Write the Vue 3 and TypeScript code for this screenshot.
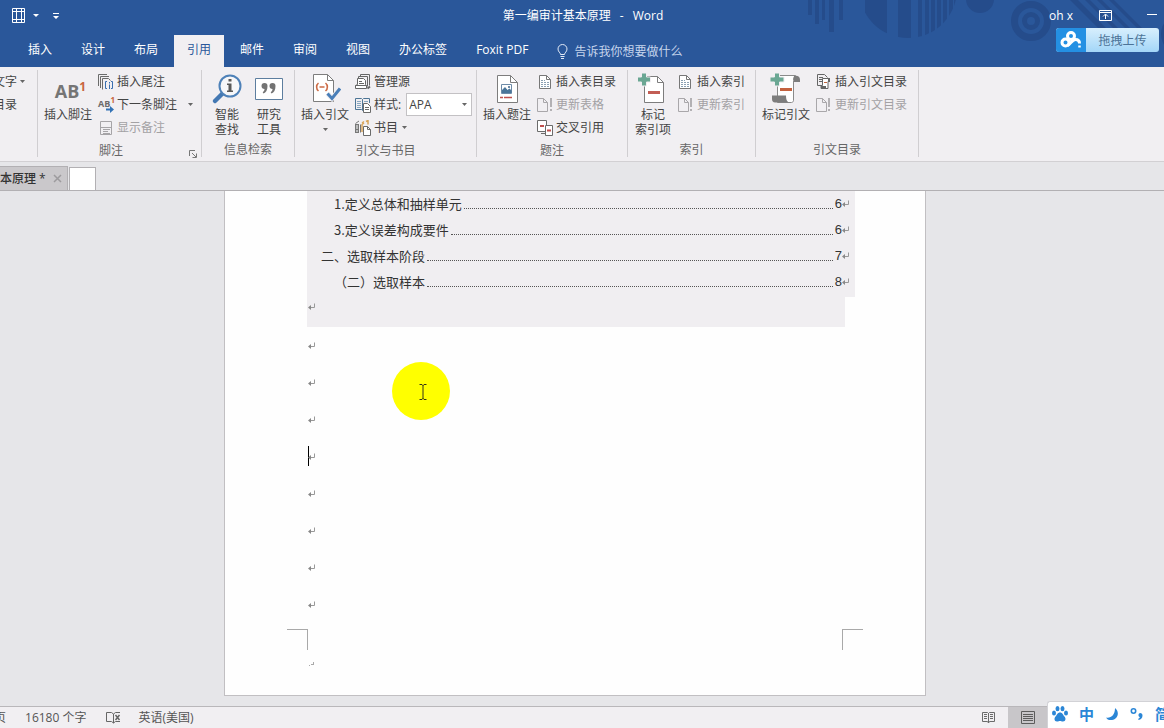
<script setup lang="ts">
import { ref } from 'vue'

interface TocEntry {
  text: string
  page: number
  level: number
}

const activeTab = ref('引用')
const tabs: string[] = ['插入', '设计', '布局', '引用', '邮件', '审阅', '视图', '办公标签', 'Foxit PDF']
const citationStyle = ref('APA')

const toc: TocEntry[] = [
  { text: '1.定义总体和抽样单元', page: 6, level: 2 },
  { text: '3.定义误差构成要件', page: 6, level: 2 },
  { text: '二、选取样本阶段', page: 7, level: 1 },
  { text: '（二）选取样本', page: 8, level: 2 },
]
const emptyParagraphs = 8
const caretParagraph = 4
const thinStripes: number[] = [918, 925, 931, 937, 943, 949, 954]
</script>

<template>
  <div class="app">
    <header class="header">
      <svg class="pattern" width="364" height="67" viewBox="800 0 364 67" aria-hidden="true">
        <defs>
          <clipPath id="disc"><circle cx="908" cy="-11" r="49" /></clipPath>
        </defs>
        <g fill="#254c8b">
          <path d="M808 0h4v15h-4zM815 0h4v24h-4zM822 0h3v20h-3zM829 0h5v32h-5zM839 0h4v20h-4z" />
          <g clip-path="url(#disc)">
            <path d="M865 0h22v40h-22zM898 0h13v40h-13z" />
            <rect v-for="x in thinStripes" :key="x" :x="x" y="0" width="4" height="40" />
          </g>
          <circle cx="980" cy="-1" r="14" />
          <path d="M1070 0h8l42 42h-8zM1085 0h5l42 42h-5zM1097 0h5l42 42h-5zM1109 0h5l42 42h-5z" />
          <circle cx="1181" cy="34" r="20" />
        </g>
        <circle cx="1031" cy="21" r="16.500" fill="none" stroke="#254c8b" stroke-width="7" />
        <circle cx="1031" cy="21" r="6.500" fill="none" stroke="#254c8b" stroke-width="5" />
      </svg>

      <div class="titlebar">
        <div class="quick">
          <button class="plain" aria-label="表格">
            <svg width="14" height="16" viewBox="0 0 14 16" fill="none" stroke="#fff"><path d="M.5.500h12v14H.500zM4.500 0v15M9.500 0v15M0 3.500h13M0 11.500h13" /></svg>
          </button>
          <button class="plain quick-arrow" aria-label="更多表格选项">
            <svg width="6" height="4" viewBox="0 0 6 4"><path d="M0 0h6L3 3z" fill="#fff" /></svg>
          </button>
          <button class="plain quick-custom" aria-label="自定义快速访问工具栏">
            <svg width="6" height="7" viewBox="0 0 6 7"><path d="M0 0h6v1H0zM0 3h6L3 6z" fill="#fff" /></svg>
          </button>
        </div>
        <h1 class="title"><span>第一编审计基本原理</span><span>-</span><span>Word</span></h1>
        <div class="account">
          <span class="user">oh x</span>
          <button class="plain" aria-label="功能区显示选项">
            <svg width="13" height="11" viewBox="0 0 13 11" fill="none" stroke="#fff"><path d="M.5.500h12v10H.500zM0 2.500h13M6.500 9V4.500M4 6.500l2.500-2.500L9 6.500" /></svg>
          </button>
          <button class="plain minimize" aria-label="最小化">
            <svg width="10" height="2" viewBox="0 0 10 2"><path d="M0 0h10v1H0z" fill="#fff" /></svg>
          </button>
        </div>
      </div>

      <nav class="tabs">
        <button v-for="t in tabs" :key="t" class="tab" :class="{ active: t === activeTab }" @click="activeTab = t">{{ t }}</button>
        <button class="tell">
          <svg width="11" height="15" viewBox="0 0 11 15" fill="none" stroke="#e3ebf7"><path d="M3.500 10.500c0-2-2.500-2.500-2.500-5.500a4.500 4.500 0 0 1 9 0c0 3-2.500 3.500-2.500 5.500zM3.500 12.500h4M4 14.500h3" /></svg>
          告诉我你想要做什么
        </button>
      </nav>

      <button class="upload">
        <span class="upload-logo">
          <svg width="22" height="18" viewBox="0 0 22 18" fill="none" stroke="#fff" stroke-width="3"><circle cx="5.500" cy="11.500" r="3.500" /><circle cx="11" cy="5" r="3.500" /><path d="M7.500 14.500c3-1 4.500-6 8-6 2.500 0 4 1.500 4 4" /><path d="M19.500 14.500v2" stroke-width="2.500" /></svg>
        </span>
        <span class="upload-text">拖拽上传</span>
      </button>
    </header>

    <section class="ribbon">
      <div class="group g-text">
        <div class="list cut">
          <button class="cmd">文字 <svg class="caret" width="5" height="3" viewBox="0 0 5 3"><path d="M0 0h5L2.500 3z" /></svg></button>
          <button class="cmd">目录</button>
        </div>
      </div>

      <div class="group g-foot">
        <div class="body">
          <button class="big">
            <span class="ab-icon">AB<sup>1</sup></span>
            <span>插入脚注</span>
          </button>
          <div class="list">
            <button class="cmd">
              <svg width="16" height="16" viewBox="0 0 16 16" fill="none" stroke="#6b6b6b"><path d="M.5 12V.500H9M2.500 14V2.500H11M4.500 15.500v-11h6l2 2" /><path d="M9 7.500H7.500v7H9M13 7.500h1.500v7H13" stroke="#3a6fb0" /><path d="M11 8h1v1.500h-1zM11 10.500h1V15h-1z" fill="#3a6fb0" stroke="none" /></svg>
              插入尾注
            </button>
            <button class="cmd">
              <span class="ab-small">AB<sup>1</sup><svg width="8" height="7" viewBox="0 0 8 7"><path d="M0 2.500h4V0l4 3.500L4 7V4.500H0z" fill="#3272b5" /></svg></span>
              下一条脚注
              <svg class="caret far" width="5" height="3" viewBox="0 0 5 3"><path d="M0 0h5L2.500 3z" /></svg>
            </button>
            <button class="cmd off" disabled>
              <svg width="16" height="16" viewBox="0 0 16 16" fill="none" stroke="#a6a4a7"><path d="M2.500 1.500h11v13h-11zM2 7.500h12M5 9.500h7M5 11.500h5M5 13.500h7" /></svg>
              显示备注
            </button>
          </div>
        </div>
        <div class="caption with-launcher">脚注
          <button class="plain launcher" aria-label="脚注和尾注设置">
            <svg width="8" height="8" viewBox="0 0 8 8" fill="none" stroke="#777"><path d="M.5 6V.500H6M3 3l4 4M7.500 3.500v4h-4" /></svg>
          </button>
        </div>
      </div>

      <div class="group g-info">
        <div class="body center">
          <button class="big mid">
            <svg width="32" height="32" viewBox="0 0 32 32"><path d="M4 28l8-8" stroke="#4478b3" stroke-width="4.500" stroke-linecap="round" /><circle cx="19" cy="13" r="10.500" fill="#f7f7f9" stroke="#4e81b8" stroke-width="2" /><path d="M17.500 6h3v2.500h-3zM16 10.500h4.500v7H22V19h-6v-1.500h1.500V12H16z" fill="#595959" /></svg>
            <span>智能<br />查找</span>
          </button>
          <button class="big mid">
            <svg width="32" height="32" viewBox="0 0 32 32"><path d="M2.500 5.500h27v21h-27z" fill="#fff" stroke="#5d7e9f" /><path d="M8.500 13a3 3 0 1 1 6 0c0 4-1.500 6.500-4 7.500l-.8-1.300c1.300-.8 1.800-1.800 1.800-3.200-1.800 0-3-1.200-3-3zM16.500 13a3 3 0 1 1 6 0c0 4-1.500 6.500-4 7.500l-.8-1.300c1.300-.8 1.800-1.800 1.800-3.200-1.800 0-3-1.200-3-3z" fill="#737373" /></svg>
            <span>研究<br />工具</span>
          </button>
        </div>
        <div class="caption">信息检索</div>
      </div>

      <div class="group g-cite">
        <div class="body">
          <button class="big">
            <svg width="32" height="32" viewBox="0 0 32 32" fill="none"><path d="M4.500 1.500h14l6 6v21h-20z" fill="#fff" stroke="#7d7d7d" /><path d="M18.500 1.500v6h6" stroke="#7d7d7d" /><path d="M9.500 10c-2.500 2-2.500 6 0 8M16.500 10c2.500 2 2.500 6 0 8M10.500 14h5" stroke="#cc6b45" stroke-width="1.600" /><path d="M18.500 20.500l4.500 5L31 15.500" stroke="#f0eef1" stroke-width="5" /><path d="M18.500 20.500l4.500 5L31 15.500" stroke="#4a7fb8" stroke-width="3" /></svg>
            <span>插入引文</span>
            <svg class="caret below" width="5" height="3" viewBox="0 0 5 3"><path d="M0 0h5L2.500 3z" /></svg>
          </button>
          <div class="list">
            <button class="cmd">
              <svg width="16" height="16" viewBox="0 0 16 16" fill="none" stroke="#666"><path d="M5.500 2.500v-2h9v11M3.500 4.500v-2h9v10" /><path d="M.5 14.500v-3l2-1v-6h6l2 2v4l1 1v3zM.5 11.500h11M4 7.500h3M4 9.500h5" fill="#fff" /><path d="M12.500 14.500l2.500-2" stroke-width="2" /></svg>
              管理源
            </button>
            <div class="cmd">
              <svg width="16" height="16" viewBox="0 0 16 16" fill="none"><path d="M.5 1.500h6l1 1 1-1h6V6M.5 1.500v11h6l1 1M7.500 2.500v11" stroke="#4d7595" /><path d="M2 4.500h4M2 6.500h4M2 8.500h4M2 10.500h4M9 4.500h4" stroke="#87a6bf" /><path d="M8.500 6.500h4l3 3v6h-7zM10 10.500h4M10 12.500h4" fill="#fff" stroke="#6b6b6b" /></svg>
              <label for="cite-style">样式:</label>
              <span class="select-wrap">
                <select id="cite-style" v-model="citationStyle">
                  <option>APA</option>
                  <option>MLA</option>
                  <option>Chicago</option>
                </select>
                <svg class="caret" width="5" height="3" viewBox="0 0 5 3"><path d="M0 0h5L2.500 3z" /></svg>
              </span>
            </div>
            <button class="cmd">
              <svg width="16" height="16" viewBox="0 0 16 16" fill="none"><path d="M0 4h4v9H0z" fill="#777" /><path d="M1 6h2M1 8h2M1 11h2" stroke="#fff" /><path d="M.5 3.500L4 1M5.500 4.500v8" stroke="#777" /><path d="M7 12V4.500L9 3M9 1.500L7 3M11 1.500l2-1v4" stroke="#d9a65c" stroke-width="1.500" /><path d="M8.500 6.500h4l3 3v6h-7z" fill="#fff" stroke="#6b6b6b" /><path d="M12.500 6.500v3h3" stroke="#6b6b6b" /></svg>
              书目 <svg class="caret near" width="5" height="3" viewBox="0 0 5 3"><path d="M0 0h5L2.500 3z" /></svg>
            </button>
          </div>
        </div>
        <div class="caption">引文与书目</div>
      </div>

      <div class="group g-caption">
        <div class="body">
          <button class="big">
            <svg width="32" height="32" viewBox="0 0 32 32" fill="none"><path d="M6.500 2.500h13l7 7v20h-20z" fill="#fff" stroke="#7d7d7d" /><path d="M19.500 2.500v7h7" stroke="#7d7d7d" /><path d="M10.500 11.500h10v9h-10z" stroke="#6d8ba8" /><path d="M11 20v-3l3-3 2.500 3 2-1.500 2 2V20z" fill="#4a7599" /><path d="M17 13h2v2h-2z" fill="#6d8ba8" /><path d="M9 24.500h3M13 24.500h8" stroke="#c0504d" stroke-width="1.500" /></svg>
            <span>插入题注</span>
          </button>
          <div class="list">
            <button class="cmd">
              <svg width="16" height="16" viewBox="0 0 16 16" fill="none" stroke="#777"><path d="M2.500 1.500h7l4 4v9h-11z" fill="#fff" /><path d="M9.500 1.500v4h4" /><path d="M4 6.500h4M4 8.500h8M4 10.500h8M4 12.500h8" stroke="#8ba0b3" stroke-dasharray="2 1" /></svg>
              插入表目录
            </button>
            <button class="cmd off" disabled>
              <svg width="16" height="16" viewBox="0 0 16 16" fill="none" stroke="#a9a7aa"><path d="M.5 1.500h6l4 4v9H.500zM6.500 1.500v4h4" /><path d="M13 1h2v9h-2zM13 12h2v2h-2z" fill="#b3b1b4" stroke="none" /></svg>
              更新表格
            </button>
            <button class="cmd">
              <svg width="16" height="16" viewBox="0 0 16 16" fill="none" stroke="#6b6b6b"><path d="M.5.500h9v11h-9z" fill="#fff" /><path d="M8.500 5.500h7v10h-7z" fill="#fff" /><path d="M4 13.500h4" /><path d="M3 6h4M10 10.500h4" stroke="#c0504d" stroke-width="2" /></svg>
              交叉引用
            </button>
          </div>
        </div>
        <div class="caption">题注</div>
      </div>

      <div class="group g-index">
        <div class="body">
          <button class="big narrow">
            <svg width="32" height="32" viewBox="0 0 32 32" fill="none"><path d="M7.500 3.500h13l6 6v20h-19z" fill="#fff" stroke="#7d7d7d" /><path d="M20.500 3.500v6h6" stroke="#7d7d7d" /><path d="M.5 4h4V0h5v4h4v5h-4v4h-5V9h-4z" fill="#6aa793" stroke="#f0eef1" /><path d="M11 18h12v3H11z" fill="#c25d54" /></svg>
            <span>标记<br />索引项</span>
          </button>
          <div class="list">
            <button class="cmd">
              <svg width="16" height="16" viewBox="0 0 16 16" fill="none" stroke="#777"><path d="M1.500 1.500h7l4 4v9h-11z" fill="#fff" /><path d="M8.500 1.500v4h4" /><path d="M3 6.500h4M3 8.500h8M3 10.500h8M3 12.500h8" stroke="#8ba0b3" stroke-dasharray="2 1" /></svg>
              插入索引
            </button>
            <button class="cmd off" disabled>
              <svg width="16" height="16" viewBox="0 0 16 16" fill="none" stroke="#a9a7aa"><path d="M.5 1.500h6l4 4v9H.500zM6.500 1.500v4h4" /><path d="M12 1h2v9h-2zM12 12h2v2h-2z" fill="#b3b1b4" stroke="none" /></svg>
              更新索引
            </button>
          </div>
        </div>
        <div class="caption">索引</div>
      </div>

      <div class="group g-auth">
        <div class="body">
          <button class="big">
            <svg width="32" height="32" viewBox="0 0 32 32" fill="none"><path d="M7.500 2.500h18c-2 1-2 3-2 5v20c0 1-1 2-2 2H7.500z" fill="#fff" stroke="#8a8a8a" /><path d="M24 3c3-1 6 0 6 3.500V9h-6z" fill="#7d7d7d" /><path d="M2 22.500h14c0 4 1 7 4 7H5c-2 0-3-1.500-3-3.500z" fill="#7d7d7d" /><path d="M0 4h4.500V0h5v4H14v5H9.500v4h-5V9H0z" fill="#6aa793" stroke="#f0eef1" /><path d="M10 15h12v3H10z" fill="#c4623f" /></svg>
            <span>标记引文</span>
          </button>
          <div class="list">
            <button class="cmd">
              <svg width="16" height="16" viewBox="0 0 16 16" fill="none" stroke="#666"><path d="M1.500.500h7l3 3M1.500.500v11h4M3 3.500h4M3 5.500h3M3 7.500h3" /><path d="M6.500 4.500h7v3h-1.500v7h-7v-3h1.500z" fill="#fff" /><path d="M5 12h5v3H5zM12 4h2v4h-2z" fill="#666" stroke="none" /><path d="M8 8.500h3" stroke="#c0633f" /></svg>
              插入引文目录
            </button>
            <button class="cmd off" disabled>
              <svg width="16" height="16" viewBox="0 0 16 16" fill="none" stroke="#a9a7aa"><path d="M.5 1.500h6l4 4v9H.500zM6.500 1.500v4h4" /><path d="M12 1h2v9h-2zM12 12h2v2h-2z" fill="#b3b1b4" stroke="none" /></svg>
              更新引文目录
            </button>
          </div>
        </div>
        <div class="caption">引文目录</div>
      </div>
    </section>

    <div class="doc-tabs">
      <div class="doc-tab">
        <span>本原理 *</span>
        <button class="plain" aria-label="关闭">
          <svg width="9" height="9" viewBox="0 0 9 9"><path d="M1 1l7 7M8 1L1 8" stroke="#9d9b9e" stroke-width="1.500" /></svg>
        </button>
      </div>
      <button class="doc-new" aria-label="新建标签"></button>
    </div>

    <main class="workspace">
      <article class="page">
        <div class="toc">
          <a v-for="e in toc" :key="e.text" href="#" class="toc-row" :class="{ sub: e.level === 2 }">
            <span>{{ e.text }}</span>
            <span class="leader"></span>
            <span class="num">{{ e.page }}</span>
            <svg class="mark" width="8" height="8" viewBox="0 0 8 8"><path d="M6.500.500v4H2" /><path class="head" d="M0 4.500L3 2v5z" /></svg>
          </a>
        </div>
        <div class="toc-end">
          <svg class="mark" width="8" height="8" viewBox="0 0 8 8"><path d="M6.500.500v4H2" /><path class="head" d="M0 4.500L3 2v5z" /></svg>
        </div>
        <p v-for="n in emptyParagraphs" :key="n" class="para">
          <span v-if="n === caretParagraph" class="text-caret"></span>
          <svg class="mark" width="8" height="8" viewBox="0 0 8 8"><path d="M6.500.500v4H2" /><path class="head" d="M0 4.500L3 2v5z" /></svg>
        </p>
        <div class="crops">
          <span class="crop left"></span>
          <span class="crop right"></span>
        </div>
        <svg class="foot-mark" width="5" height="4" viewBox="0 0 5 4"><path d="M0 3h1v1H0zM2 2h2V0h1v3H2z" fill="#aaa" /></svg>
        <div class="pointer">
          <svg width="8" height="16" viewBox="0 0 8 16" fill="none" stroke="#33331a"><path d="M.5.500H3l1 1 1-1h2.500M4 1v14M.5 15.500H3l1-1 1 1h2.500" /></svg>
        </div>
      </article>
    </main>

    <footer class="status">
      <div class="status-left">
        <span class="page-no">页</span>
        <span class="words">16180 个字</span>
        <button class="plain proof" aria-label="校对">
          <svg width="15" height="13" viewBox="0 0 15 13" fill="none" stroke="#666"><path d="M.5 1.500h5l2 1.500v9l-2-1.500h-5zM7.500 3l2-1.500h4.500M7.500 12l2-1.500h4.500" /><path d="M9.500 4l4 5M13.500 4l-4 5" stroke-width="1.500" /></svg>
        </button>
        <span>英语(美国)</span>
      </div>
      <div class="status-right">
        <button class="plain view" aria-label="阅读视图">
          <svg width="13" height="13" viewBox="0 0 13 13" fill="none" stroke="#6b6b6b"><path d="M.5 1.500h5l1 1 1-1h5v9h-5l-1 1.500-1-1.500h-5zM6.500 2v10M2 3.500h3M2 5.500h3M2 7.500h3M8 3.500h3M8 5.500h3M8 7.500h3" /></svg>
        </button>
        <button class="plain view on" aria-label="页面视图">
          <svg width="14" height="13" viewBox="0 0 14 13" fill="none" stroke="#5c5c5c"><path d="M.5.500h13v12H.500zM2 3.500h10M2 5.500h10M2 7.500h10M2 9.500h10" /></svg>
        </button>
      </div>
    </footer>

    <div class="ime">
      <svg width="16" height="16" viewBox="0 0 16 16" fill="#2b86d6"><ellipse cx="2" cy="7" rx="2" ry="2.500" /><ellipse cx="5.500" cy="2.700" rx="2" ry="2.600" /><ellipse cx="10.500" cy="2.700" rx="2" ry="2.600" /><ellipse cx="14" cy="7" rx="2" ry="2.500" /><path d="M8 6.500c2.500 0 3 2.500 4.500 4s1.500 5-1.500 5c-1.500 0-2-.5-3-.5s-1.500.5-3 .5c-3 0-3-3.500-1.500-5s2-4 4.500-4z" /></svg>
      <button class="plain zh">中</button>
      <svg width="14" height="14" viewBox="0 0 14 14" fill="#2b86d6"><path d="M10 1c5 4 3 11-3 12-3 .4-5-.5-6-2.500C6 11.500 10 8 10 1z" /></svg>
      <svg width="14" height="14" viewBox="0 0 14 14"><circle cx="3.500" cy="4" r="2.200" fill="none" stroke="#2b86d6" stroke-width="1.600" /><path d="M10 6a2.500 2.500 0 0 1 2.500 2.500c0 2.500-1.500 4-4 4.500l-.3-1.200c1-.4 1.500-.8 1.600-1.500A2.300 2.300 0 0 1 10 6z" fill="#2b86d6" /></svg>
      <button class="plain zh">简</button>
    </div>
  </div>
</template>

<style>
body {
  background: #e6e6e9;
}
</style>

<style scoped>
.app {
  position: relative;
  display: flex;
  flex-direction: column;
  min-height: 100vh;
  overflow: hidden;
  font: 12px/15px "Open Sans", "Noto Sans CJK SC", sans-serif;
  color: #444;
}
.app * {
  box-sizing: border-box;
}
button {
  margin: 0;
  padding: 0;
  border: 0;
  background: none;
  font: inherit;
  color: inherit;
  white-space: nowrap;
}
svg {
  display: block;
  flex: none;
}
.plain {
  display: flex;
  align-items: center;
  justify-content: center;
}

/* Header */
.header {
  position: relative;
  background: #2a579a;
  color: #fff;
}
.pattern {
  position: absolute;
  top: 0;
  right: 0;
}
.titlebar {
  position: relative;
  display: grid;
  grid-template-columns: 1fr auto 1fr;
  align-items: center;
  height: 32px;
  padding: 0 7px 2px 12px;
}
.quick {
  display: flex;
  align-items: center;
  padding-top: 2px;
}
.quick-arrow {
  margin-left: 7px;
}
.quick-custom {
  margin-left: 14px;
}
.title {
  display: flex;
  gap: 9px;
  margin: 0;
  padding-right: 3px;
  font-size: 12px;
  font-weight: 400;
}
.account {
  display: flex;
  align-items: center;
  justify-content: flex-end;
}
.user {
  margin-right: 26px;
}
.minimize {
  margin-left: 35px;
}
.tabs {
  position: relative;
  display: flex;
  gap: 3px;
  height: 35px;
  padding: 3px 0 0 15px;
}
.tab {
  padding: 0 13px 3px;
}
.tab.active {
  background: #f1eff2;
  color: #2a579a;
}
.tell {
  display: flex;
  align-items: center;
  gap: 6px;
  margin-left: 13px;
  color: #c6d5ec;
}
.upload {
  position: absolute;
  top: 28px;
  right: 5px;
  display: flex;
  width: 103px;
  height: 24px;
  overflow: hidden;
  border-radius: 3px;
  background: linear-gradient(#d8effd, #a3d6f8);
  color: #4c7397;
}
.upload-logo {
  display: flex;
  align-items: center;
  justify-content: center;
  width: 30px;
  height: 24px;
  background: #2490e3;
}
.upload-text {
  flex: 1;
  line-height: 25px;
}

/* Ribbon */
.ribbon {
  display: flex;
  height: 95px;
  padding: 3px 0 4px;
  border-bottom: 1px solid #d2d0d3;
  background: #f1eff2;
}
.group {
  flex: none;
  display: flex;
  flex-direction: column;
  border-right: 1px solid #d0ced1;
}
.g-text { width: 38px; }
.g-foot { width: 164px; }
.g-info { width: 93px; }
.g-cite { width: 182px; }
.g-caption { width: 151px; }
.g-index { width: 128px; }
.g-auth { width: 163px; }
.body {
  display: flex;
  gap: 3px;
  height: 70px;
  padding-left: 3px;
}
.body.center {
  gap: 0;
  padding: 0;
  justify-content: center;
}
.big {
  display: flex;
  flex-direction: column;
  align-items: center;
  gap: 2px;
  width: 54px;
  padding-top: 3px;
}
.big.mid {
  width: 42px;
}
.big.narrow {
  width: 44px;
}
.caret {
  fill: #666;
}
.caret.below {
  margin-top: 4px;
}
.caret.far {
  margin-left: 8px;
}
.caret.near {
  margin-left: 1px;
}
.list {
  display: flex;
  flex-direction: column;
}
.list.cut {
  margin-left: -7px;
}
.cmd {
  display: flex;
  align-items: center;
  gap: 3px;
  height: 23px;
}
.off {
  color: #a3a1a4;
}
.ab-icon {
  height: 32px;
  padding-left: 5px;
  font: bold 18px/36px "Open Sans", sans-serif;
  color: #757575;
}
.ab-icon sup {
  font-size: 12px;
  line-height: 12px;
  color: #c8643f;
}
.ab-small {
  position: relative;
  width: 16px;
  height: 16px;
  font: bold 9px/14px "Open Sans", sans-serif;
  text-align: left;
  color: #6b6b6b;
}
.ab-small sup {
  position: absolute;
  top: -1px;
  right: -1px;
  font-size: 8px;
  line-height: 8px;
  color: #c8643f;
}
.ab-small svg {
  position: absolute;
  right: 0;
  bottom: 0;
}
.select-wrap {
  position: relative;
  display: block;
  margin-left: 2px;
}
.select-wrap select {
  display: block;
  width: 66px;
  height: 23px;
  padding: 0 2px;
  border: 1px solid #c3c1c4;
  border-radius: 0;
  appearance: none;
  background: #fff;
  font: inherit;
  color: #444;
}
.select-wrap .caret {
  position: absolute;
  top: 10px;
  right: 5px;
}
.caption {
  display: flex;
  align-items: center;
  justify-content: center;
  flex: 1;
  position: relative;
  padding-top: 4px;
  color: #666;
}
.with-launcher {
  padding-right: 17px;
}
.launcher {
  position: absolute;
  right: 4px;
  bottom: 0;
}

/* Document tabs */
.doc-tabs {
  display: flex;
  align-items: flex-end;
  gap: 1px;
  height: 29px;
  padding-top: 4px;
  border-bottom: 1px solid #b2b0b3;
}
.doc-tab {
  display: flex;
  align-items: center;
  justify-content: space-between;
  width: 68px;
  height: 24px;
  padding: 0 5px 1px 0;
  border: 1px solid #b2b0b3;
  border-width: 1px 1px 0 0;
  background: #cac8cb;
  font-weight: 500;
  color: #333;
}
.doc-new {
  width: 27px;
  height: 23px;
  border: 1px solid #b2b0b3;
  border-bottom: 0;
  background: #fff;
}

/* Document */
.workspace {
  flex: 1;
  display: flex;
  justify-content: center;
  padding: 0 14px 10px 0;
}
.page {
  position: relative;
  width: 702px;
  padding: 0 70px 0 82px;
  border: 1px solid #c1bfc2;
  border-top: 0;
  background: #fefefe;
}
.toc {
  padding: 0 5px 2px 14px;
  background: #f0eef1;
}
.toc-row {
  display: flex;
  align-items: center;
  height: 26px;
  padding-bottom: 1px;
  font: 13px/25px "Noto Sans CJK SC", sans-serif;
  color: #333;
  text-decoration: none;
}
.toc-row.sub {
  padding-left: 13px;
}
.leader {
  flex: 1;
  height: 10px;
  margin: 0 2px;
  border-bottom: 1px dotted #555;
}
.num {
  font-family: "Liberation Sans", sans-serif;
}
.mark {
  fill: none;
  stroke: #999;
}
.mark .head {
  fill: #888;
  stroke: none;
}
.toc-end {
  height: 30px;
  margin-right: 10px;
  padding: 6px 0 0 1px;
  background: #f0eef1;
}
.para {
  display: flex;
  align-items: center;
  height: 37px;
  margin: 0;
  padding: 1px 0 0 1px;
}
.text-caret {
  width: 1px;
  height: 20px;
  margin: 0 -1px 3px 0;
  background: #000;
}
.crops {
  display: flex;
  justify-content: space-between;
  margin: 6px -8px 0 -20px;
}
.crop {
  width: 21px;
  height: 21px;
  border-top: 1px solid #a9a9a9;
}
.crop.left {
  border-right: 1px solid #a9a9a9;
}
.crop.right {
  border-left: 1px solid #a9a9a9;
}
.foot-mark {
  margin: 12px 0 0 2px;
}
.pointer {
  position: absolute;
  top: 171px;
  left: 167px;
  display: flex;
  align-items: center;
  justify-content: center;
  width: 58px;
  height: 58px;
  padding: 2px 0 0 4px;
  border-radius: 50%;
  background: #ff0;
}

/* Status bar */
.status {
  display: flex;
  justify-content: space-between;
  height: 22px;
  border-top: 1px solid #b9b7ba;
  background: #f1eff2;
  color: #555;
}
.status-left {
  display: flex;
  align-items: center;
  padding-bottom: 1px;
}
.page-no {
  margin: 0 19px 0 -6px;
}
.proof {
  margin: 0 17px 0 20px;
}
.status-right {
  display: flex;
  padding-right: 116px;
}
.view {
  width: 40px;
}
.view.on {
  background: #c8c6c9;
}
.ime {
  position: absolute;
  right: 0;
  bottom: 0;
  display: flex;
  align-items: center;
  gap: 11px;
  width: 117px;
  height: 27px;
  padding: 0 0 2px 4px;
  overflow: hidden;
  border: 1px solid #d2d2d6;
  border-width: 1px 0 0 1px;
  border-radius: 3px 0 0 0;
  background: #fff;
}
.zh {
  flex: none;
  font: bold 15px/20px "Noto Sans CJK SC", sans-serif;
  color: #2b86d6;
}
</style>
